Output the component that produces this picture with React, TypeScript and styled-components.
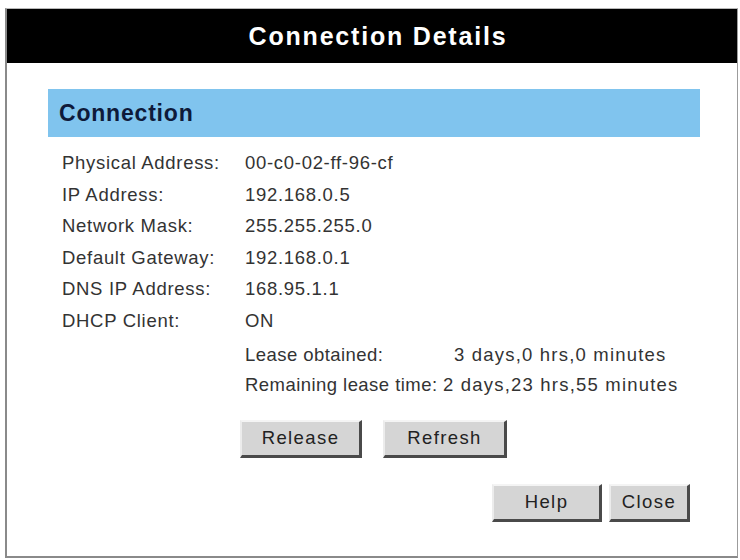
import { Fragment } from "react";
import styled, { createGlobalStyle } from "styled-components";

const GlobalStyle = createGlobalStyle`
  html, body {
    margin: 0;
    background: #fff;
  }
  body {
    padding: 8px 0 0 5px;
    font-family: "Liberation Sans", Arial, sans-serif;
  }
`;

const Dialog = styled.div`
  width: 733px;
  height: 550px;
  box-sizing: border-box;
  border-top: 1px solid #b8b8b8;
  border-right: 1px solid #9c9c9c;
  border-left: 2px solid #8a8a8a;
  border-bottom: 2px solid #8a8a8a;
  display: flex;
  flex-direction: column;
`;

const TitleBar = styled.div`
  height: 54px;
  background: #000;
  color: #fff;
  display: flex;
  align-items: center;
  justify-content: center;
  padding-left: 12px;
  font-size: 25px;
  font-weight: bold;
  letter-spacing: 1.8px;
`;

const Body = styled.div`
  padding: 26px 37px 0 41px;
  display: flex;
  flex-direction: column;
`;

const SectionBar = styled.div`
  height: 48px;
  background: #80c4ee;
  color: #0e1a3a;
  display: flex;
  align-items: center;
  padding-left: 11px;
  font-size: 23px;
  font-weight: bold;
  letter-spacing: 0.8px;
`;

const DetailGrid = styled.div`
  margin-top: 10px;
  padding-left: 14px;
  display: grid;
  grid-template-columns: 183px auto;
  line-height: 31.6px;
  font-size: 18.5px;
  letter-spacing: 0.7px;
  color: #333;
`;

const LeaseBlock = styled.div`
  margin-top: 3px;
  padding-left: 197px;
  font-size: 18.5px;
  color: #333;
`;

const LeaseRow = styled.div<{ $labelWidth: number }>`
  display: grid;
  grid-template-columns: ${(p) => p.$labelWidth}px auto;
  line-height: 30px;
  white-space: nowrap;
`;

const LeaseLabel = styled.span`
  letter-spacing: 0.45px;
`;

const LeaseValue = styled.span`
  letter-spacing: 1.2px;
`;

const ButtonRow = styled.div<{ $align: "start" | "end"; $gap: number }>`
  display: flex;
  justify-content: ${(p) => (p.$align === "end" ? "flex-end" : "flex-start")};
  gap: ${(p) => p.$gap}px;
`;

const ActionRow = styled(ButtonRow)`
  margin-top: 20px;
  padding-left: 192px;
`;

const FooterRow = styled(ButtonRow)`
  margin-top: 26px;
  padding-right: 10px;
`;

const Button = styled.button<{ $width: number }>`
  width: ${(p) => p.$width}px;
  height: 38px;
  box-sizing: border-box;
  background: #d5d5d5;
  border-top: 2px solid #f4f4f4;
  border-left: 2px solid #ececec;
  border-right: 3px solid #4a4a4a;
  border-bottom: 3px solid #4a4a4a;
  border-radius: 0;
  padding: 0;
  font-family: "Liberation Sans", Arial, sans-serif;
  font-size: 18.5px;
  letter-spacing: 1.4px;
  color: #222;
`;

const details: [string, string][] = [
  ["Physical Address:", "00-c0-02-ff-96-cf"],
  ["IP Address:", "192.168.0.5"],
  ["Network Mask:", "255.255.255.0"],
  ["Default Gateway:", "192.168.0.1"],
  ["DNS IP Address:", "168.95.1.1"],
  ["DHCP Client:", "ON"],
];

export default function App() {
  return (
    <>
      <GlobalStyle />
      <Dialog>
        <TitleBar>Connection Details</TitleBar>
        <Body>
          <SectionBar>Connection</SectionBar>
          <DetailGrid>
            {details.map(([label, value]) => (
              <Fragment key={label}>
                <span>{label}</span>
                <span>{value}</span>
              </Fragment>
            ))}
          </DetailGrid>
          <LeaseBlock>
            <LeaseRow $labelWidth={209}>
              <LeaseLabel>Lease obtained:</LeaseLabel>
              <LeaseValue>3 days,0 hrs,0 minutes</LeaseValue>
            </LeaseRow>
            <LeaseRow $labelWidth={198}>
              <LeaseLabel>Remaining lease time:</LeaseLabel>
              <LeaseValue>2 days,23 hrs,55 minutes</LeaseValue>
            </LeaseRow>
          </LeaseBlock>
          <ActionRow $align="start" $gap={21}>
            <Button $width={122}>Release</Button>
            <Button $width={124}>Refresh</Button>
          </ActionRow>
          <FooterRow $align="end" $gap={7}>
            <Button $width={110}>Help</Button>
            <Button $width={81}>Close</Button>
          </FooterRow>
        </Body>
      </Dialog>
    </>
  );
}
